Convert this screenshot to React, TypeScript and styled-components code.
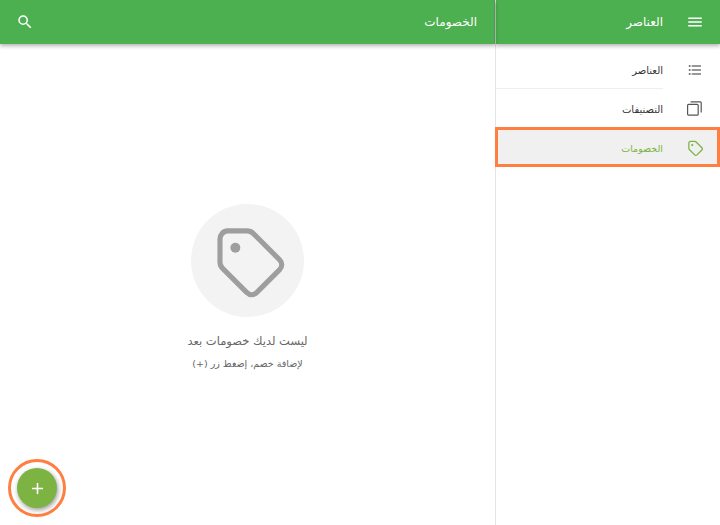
import styled, { createGlobalStyle } from "styled-components";
import { MdMenu, MdSearch, MdAdd, MdOutlineFormatListBulleted } from "react-icons/md";

const GlobalStyle = createGlobalStyle`
    html, body {
        margin: 0;
        padding: 0;
        width: 720px;
        height: 525px;
        overflow: hidden;
        background: #fff;
    }
    * { box-sizing: border-box; }
`;

const TagIcon = ({ size, color, width }: { size: number; color: string; width: number }) => (
    <svg width={size} height={size} viewBox="-0.4 -0.4 24 24" fill="none">
        <path
            d="M3.4 5.2 C3.4 3.9 4.4 2.8 5.7 2.8 L11.3 2.8 C12 2.8 12.6 3 13.1 3.5 L20.8 11.2 C21.7 12.1 21.7 13.3 20.8 14.2 L14.2 20.8 C13.3 21.7 12.1 21.7 11.2 20.8 L4.1 13.7 C3.6 13.2 3.4 12.6 3.4 12 Z"
            stroke={color}
            strokeWidth={width}
            strokeLinejoin="round"
        />
        <circle cx="7.9" cy="7.7" r="1.45" fill={color} />
    </svg>
);

const CopyIcon = () => (
    <svg width="15" height="15" viewBox="0 0 15 15" fill="none" stroke="#555" strokeWidth="1.2">
        <rect x="0.6" y="3.4" width="10.6" height="10.8" rx="1" />
        <path d="M3.6 0.8 H13.2 a1 1 0 0 1 1 1 V11.6" />
    </svg>
);

const items = [
    { label: "العناصر", icon: <MdOutlineFormatListBulleted size={16} color="#777" />, height: 40, divider: true },
    { label: "التصنيفات", icon: <CopyIcon />, height: 38 },
    { label: "الخصومات", icon: <TagIcon size={18} color="#7cb342" width={1.7} />, height: 40, active: true },
];

export default function App() {
    return (
        <>
            <GlobalStyle />
            <Page dir="rtl">
                <Sidebar>
                    <SideBar>
                        <HeaderIcon><MdMenu size={18} color="#fff" /></HeaderIcon>
                        <HeaderTitle>العناصر</HeaderTitle>
                    </SideBar>
                    <Menu>
                        {items.map((item) => (
                            <MenuRow key={item.label} $active={item.active} $height={item.height}>
                                <MenuIcon>{item.icon}</MenuIcon>
                                <MenuLabel $active={item.active} $divider={item.divider}>{item.label}</MenuLabel>
                            </MenuRow>
                        ))}
                    </Menu>
                </Sidebar>
                <Main>
                    <MainBar>
                        <HeaderTitle>الخصومات</HeaderTitle>
                        <SearchButton><MdSearch size={18} color="#fff" /></SearchButton>
                    </MainBar>
                    <Empty>
                        <EmptyCircle><TagIcon size={82} color="#9e9e9e" width={1.5} /></EmptyCircle>
                        <EmptyTitle>ليست لديك خصومات بعد</EmptyTitle>
                        <EmptyHint>لإضافة خصم، إضغط زر (+)</EmptyHint>
                    </Empty>
                    <FabRing>
                        <Fab><MdAdd size={19} color="#fff" /></Fab>
                    </FabRing>
                </Main>
            </Page>
        </>
    );
}

const arabicFont = `"DejaVu Sans", "Noto Sans", sans-serif`;

const Page = styled.div`
    display: flex;
    width: 720px;
    height: 525px;
    font-family: ${arabicFont};
`;

const Sidebar = styled.aside`
    width: 225px;
    flex: none;
    display: flex;
    flex-direction: column;
    border-left: 1px solid #e4e4e4;
`;

const SideBar = styled.header`
    height: 44px;
    flex: none;
    display: flex;
    align-items: center;
    background: #4caf50;
    box-shadow: 0 2px 4px rgba(0, 0, 0, 0.3);
    position: relative;
    z-index: 2;
`;

const MainBar = styled(SideBar)`
    justify-content: space-between;
    padding-right: 18px;
    padding-left: 16px;
    &::before {
        content: "";
        position: absolute;
        top: 0;
        right: 0;
        bottom: 0;
        width: 1px;
        background: #469f49;
    }
`;

const HeaderIcon = styled.div`
    width: 57px;
    padding-left: 6px;
    flex: none;
    display: flex;
    justify-content: center;
    line-height: 0;
`;

const HeaderTitle = styled.span`
    color: #fff;
    font-size: 12px;
`;

const SearchButton = styled.div`
    line-height: 0;
`;

const Menu = styled.nav`
    padding-top: 5px;
    display: flex;
    flex-direction: column;
`;

const MenuRow = styled.div<{ $active?: boolean; $height: number }>`
    height: ${(p) => p.$height}px;
    display: flex;
    align-items: stretch;
    background: ${(p) => (p.$active ? "#f0f0f0" : "transparent")};
    border: ${(p) => (p.$active ? "3px solid #ff7f41" : "0")};
    margin-left: ${(p) => (p.$active ? "-1px" : "0")};
    padding-right: ${(p) => (p.$active ? "0" : "3px")};
`;

const MenuIcon = styled.div`
    width: 54px;
    padding-left: 9px;
    padding-top: 1px;
    flex: none;
    display: flex;
    align-items: center;
    justify-content: center;
    line-height: 0;
`;

const MenuLabel = styled.div<{ $active?: boolean; $divider?: boolean }>`
    flex: 1;
    display: flex;
    align-items: center;
    padding-top: 3px;
    font-size: ${(p) => (p.$active ? "9.5px" : "10px")};
    color: ${(p) => (p.$active ? "#7cb342" : "#333")};
    border-bottom: ${(p) => (p.$divider ? "1px solid #eee" : "0")};
`;

const Main = styled.main`
    flex: 1;
    position: relative;
    display: flex;
    flex-direction: column;
`;

const Empty = styled.section`
    display: flex;
    flex-direction: column;
    align-items: center;
    padding-top: 160px;
`;

const EmptyCircle = styled.div`
    width: 113px;
    height: 113px;
    border-radius: 50%;
    background: #f3f3f3;
    display: flex;
    align-items: center;
    justify-content: center;
`;

const EmptyTitle = styled.div`
    margin-top: 15px;
    font-size: 11.5px;
    line-height: 18px;
    color: #666;
`;

const EmptyHint = styled.div`
    margin-top: 7px;
    font-size: 9.5px;
    line-height: 14px;
    color: #666;
`;

const FabRing = styled.div`
    position: absolute;
    left: 8px;
    bottom: 8px;
    width: 58px;
    height: 58px;
    border-radius: 50%;
    border: 3px solid #ff7f41;
    display: flex;
    align-items: center;
    justify-content: center;
`;

const Fab = styled.div`
    width: 40px;
    height: 40px;
    border-radius: 50%;
    background: #7cb342;
    box-shadow: 1px 2px 5px rgba(0, 0, 0, 0.4);
    display: flex;
    align-items: center;
    justify-content: center;
    line-height: 0;
`;
